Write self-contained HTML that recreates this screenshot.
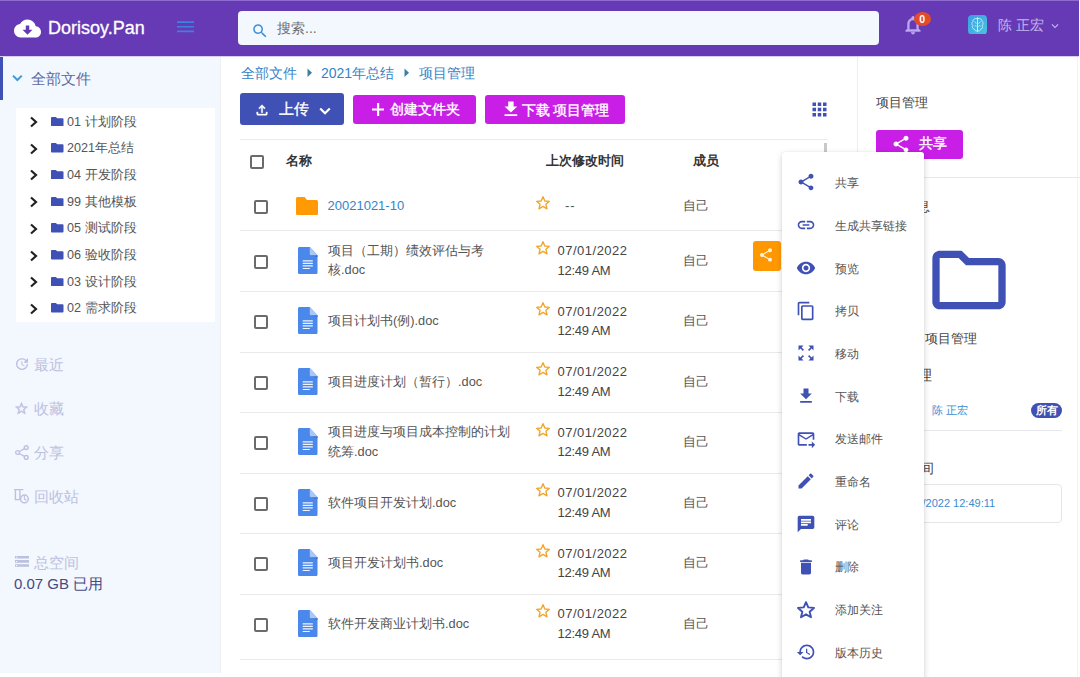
<!DOCTYPE html>
<html><head><meta charset="utf-8">
<style>
*{box-sizing:border-box;margin:0;padding:0}
html,body{width:1080px;height:677px;overflow:hidden;background:#fff;font-family:"Liberation Sans",sans-serif;color:#4a4a4a}
.a{position:absolute}
svg{display:block}
#hdr{left:0;top:0;width:1079px;height:57px;background:#653ab4;border-top:1px solid #8e6ad0;border-bottom:1px solid #d9cdf0}
#side{left:0;top:57px;width:221px;height:615.6px;background:#f3f7fe;border-right:1px solid #eef0f4}
#main{left:221px;top:57px;width:637px;height:620px;background:#fff}
#rp{left:857px;top:57px;width:223px;height:620px;background:#fff;border-left:1px solid #eceef3}
.nav{font-size:15px;color:#bcc1e0;left:34px;white-space:nowrap}
.tree{left:16px;top:108px;width:199px;height:214px;background:#fff}
.tr{position:absolute;left:0;height:27px;width:199px}
.tr .chev{position:absolute;left:13px;top:8px}
.tr .fd{position:absolute;left:35px;top:8.5px}
.tr .t{position:absolute;left:51px;top:5.5px;font-size:12.6px;color:#555;white-space:nowrap}
.btn{border-radius:3px;color:#fff;font-size:14px}
.row{position:absolute;left:240px;width:588px;border-bottom:1px solid #e8e8ec}
.cb{position:absolute;width:14px;height:14px;border:2px solid #6b6b6b;border-radius:2px}
.mi{position:absolute;left:0;width:142px;height:42.73px}
.mi svg{position:absolute;left:14px;top:11px}
.mi span{position:absolute;left:52.5px;top:13.8px;font-size:12px;color:#555;white-space:nowrap}
</style></head><body>
<!-- header -->
<div id="hdr" class="a">
  <svg class="a" style="left:13.7px;top:14.2px" width="27" height="27" viewBox="0 0 24 24"><path fill="#fff" fill-rule="evenodd" d="M19.35 10.04C18.67 6.59 15.64 4 12 4 9.11 4 6.6 5.64 5.35 8.04 2.34 8.36 0 10.91 0 14c0 3.31 2.69 6 6 6h13c2.76 0 5-2.24 5-5 0-2.64-2.05-4.78-4.65-4.96zM16.4 13.2L12 17.6 7.6 13.2H10.45V9.4H13.55V13.2z"/></svg>
  <div class="a" style="left:48px;top:17px;font-size:18px;color:#fff;white-space:nowrap;-webkit-text-stroke:0.3px #fff">Dorisoy.Pan</div>
  <svg class="a" style="left:176.5px;top:19.5px" width="17" height="12" viewBox="0 0 17 12"><path fill="#3f80e2" d="M0 .3h17v1.7H0zM0 4.9h17v1.7H0zM0 9.5h17v1.7H0z"/></svg>
  <div class="a" style="left:238px;top:10px;width:641px;height:34px;background:#f3f7fe;border-radius:4px"></div>
  <svg class="a" style="left:251px;top:21px" width="18" height="18" viewBox="0 0 24 24"><path fill="#3b8fd6" d="M15.5 14h-.79l-.28-.27C15.41 12.59 16 11.11 16 9.5 16 5.910 13.09 3 9.5 3S3 5.91 3 9.5 5.91 16 9.5 16c1.61 0 3.09-.59 4.23-1.57l.27.28v.79l5 4.99L20.49 19l-4.99-5zm-6 0C7.01 14 5 11.99 5 9.5S7.01 5 9.5 5 14 7.01 14 9.5 11.99 14 9.5 14z"/></svg>
  <div class="a" style="left:277px;top:19px;font-size:14px;color:#707070;white-space:nowrap">搜索...</div>
  <svg class="a" style="left:902px;top:13px" width="22" height="22" viewBox="0 0 24 24"><path fill="#bcaaf0" stroke="#bcaaf0" stroke-width="0.5" d="M12 22c1.1 0 2-.9 2-2h-4c0 1.1.9 2 2 2zm6-6v-5c0-3.07-1.64-5.64-4.5-6.32V4c0-.83-.67-1.5-1.5-1.5s-1.5.67-1.5 1.5v.68C7.63 5.36 6 7.92 6 11v5l-2 2v1h16v-1l-2-2zm-2 1H8v-6c0-2.48 1.51-4.5 4-4.5s4 2.020 4 4.5v6z"/></svg>
  <div class="a" style="left:913.5px;top:11.2px;width:17.5px;height:14px;border-radius:50%;background:#e44a2c;color:#fff;font-size:10.5px;font-weight:bold;text-align:center;line-height:14px">0</div>
  <svg class="a" style="left:968px;top:13.5px" width="19" height="19.5" viewBox="0 0 19 19.5"><defs><linearGradient id="ag" x1="0" y1="0" x2="1" y2="1"><stop offset="0" stop-color="#3a9ee6"/><stop offset="1" stop-color="#4cc3dc"/></linearGradient></defs><rect width="19" height="19.5" rx="4" fill="url(#ag)"/><g fill="none" stroke="#c8f4fb" stroke-width="0.9"><path d="M9.5 2.2v15"/><path d="M9 3.6C6.5 3 4.6 4.8 4.9 6.6 3.6 7.6 3.7 9.6 4.8 10.4c-.9 1.4-.2 3.4 1.4 3.7.4 1.6 2 2.1 2.9 1.7"/><path d="M10 3.6c2.5-.6 4.4 1.2 4.1 3 1.3 1 1.2 3 .1 3.8.9 1.4.2 3.4-1.4 3.7-.4 1.6-2 2.1-2.9 1.7"/><path d="M6.5 6.8c1 .2 1.6 1 1.6 1.8M6.6 11c.8-.4 1.6-.2 2.1.4M12.5 6.8c-1 .2-1.6 1-1.6 1.8M12.4 11c-.8-.4-1.6-.2-2.1.4"/></g></svg>
  <div class="a" style="left:998px;top:16px;font-size:14px;color:#c6b6ee;white-space:nowrap">陈 正宏</div>
  <svg class="a" style="left:1048px;top:17.5px" width="14" height="14" viewBox="0 0 24 24"><path fill="#c9b8f0" d="M16.59 8.59L12 13.17 7.41 8.59 6 10l6 6 6-6z"/></svg>
</div>

<!-- sidebar -->
<div id="side" class="a">
  <div class="a" style="left:0;top:0;width:3px;height:43px;background:#3f51b5"></div>
  <svg class="a" style="left:12px;top:17px" width="11" height="9" viewBox="0 0 11 9"><path d="M1 1.6L5.4 6 9.8 1.6" fill="none" stroke="#3d9bd6" stroke-width="2"/></svg>
  <div class="a" style="left:31px;top:13px;font-size:15px;color:#5a6aa0;white-space:nowrap">全部文件</div>
  <div class="a tree" style="top:51px">
  <div class="tr" style="top:0.0px"><svg class="chev" width="10" height="12" viewBox="0 0 10 12"><path d="M2 1.5 L7 6 L2 10.5" fill="none" stroke="#222" stroke-width="2.2"/></svg><svg class="fd" width="12.5" height="9.5" viewBox="0 0 13 11" preserveAspectRatio="none"><path fill="#3f51b5" d="M0 1.2C0 .5.5 0 1.2 0H5l1.5 1.5h5.3c.7 0 1.2.5 1.2 1.2v7.1c0 .7-.5 1.2-1.2 1.2H1.2C.5 11 0 10.5 0 9.8z"/></svg><span class="t">01 计划阶段</span></div>
  <div class="tr" style="top:26.7px"><svg class="chev" width="10" height="12" viewBox="0 0 10 12"><path d="M2 1.5 L7 6 L2 10.5" fill="none" stroke="#222" stroke-width="2.2"/></svg><svg class="fd" width="12.5" height="9.5" viewBox="0 0 13 11" preserveAspectRatio="none"><path fill="#3f51b5" d="M0 1.2C0 .5.5 0 1.2 0H5l1.5 1.5h5.3c.7 0 1.2.5 1.2 1.2v7.1c0 .7-.5 1.2-1.2 1.2H1.2C.5 11 0 10.5 0 9.8z"/></svg><span class="t">2021年总结</span></div>
  <div class="tr" style="top:53.4px"><svg class="chev" width="10" height="12" viewBox="0 0 10 12"><path d="M2 1.5 L7 6 L2 10.5" fill="none" stroke="#222" stroke-width="2.2"/></svg><svg class="fd" width="12.5" height="9.5" viewBox="0 0 13 11" preserveAspectRatio="none"><path fill="#3f51b5" d="M0 1.2C0 .5.5 0 1.2 0H5l1.5 1.5h5.3c.7 0 1.2.5 1.2 1.2v7.1c0 .7-.5 1.2-1.2 1.2H1.2C.5 11 0 10.5 0 9.8z"/></svg><span class="t">04 开发阶段</span></div>
  <div class="tr" style="top:80.1px"><svg class="chev" width="10" height="12" viewBox="0 0 10 12"><path d="M2 1.5 L7 6 L2 10.5" fill="none" stroke="#222" stroke-width="2.2"/></svg><svg class="fd" width="12.5" height="9.5" viewBox="0 0 13 11" preserveAspectRatio="none"><path fill="#3f51b5" d="M0 1.2C0 .5.5 0 1.2 0H5l1.5 1.5h5.3c.7 0 1.2.5 1.2 1.2v7.1c0 .7-.5 1.2-1.2 1.2H1.2C.5 11 0 10.5 0 9.8z"/></svg><span class="t">99 其他模板</span></div>
  <div class="tr" style="top:106.8px"><svg class="chev" width="10" height="12" viewBox="0 0 10 12"><path d="M2 1.5 L7 6 L2 10.5" fill="none" stroke="#222" stroke-width="2.2"/></svg><svg class="fd" width="12.5" height="9.5" viewBox="0 0 13 11" preserveAspectRatio="none"><path fill="#3f51b5" d="M0 1.2C0 .5.5 0 1.2 0H5l1.5 1.5h5.3c.7 0 1.2.5 1.2 1.2v7.1c0 .7-.5 1.2-1.2 1.2H1.2C.5 11 0 10.5 0 9.8z"/></svg><span class="t">05 测试阶段</span></div>
  <div class="tr" style="top:133.5px"><svg class="chev" width="10" height="12" viewBox="0 0 10 12"><path d="M2 1.5 L7 6 L2 10.5" fill="none" stroke="#222" stroke-width="2.2"/></svg><svg class="fd" width="12.5" height="9.5" viewBox="0 0 13 11" preserveAspectRatio="none"><path fill="#3f51b5" d="M0 1.2C0 .5.5 0 1.2 0H5l1.5 1.5h5.3c.7 0 1.2.5 1.2 1.2v7.1c0 .7-.5 1.2-1.2 1.2H1.2C.5 11 0 10.5 0 9.8z"/></svg><span class="t">06 验收阶段</span></div>
  <div class="tr" style="top:160.2px"><svg class="chev" width="10" height="12" viewBox="0 0 10 12"><path d="M2 1.5 L7 6 L2 10.5" fill="none" stroke="#222" stroke-width="2.2"/></svg><svg class="fd" width="12.5" height="9.5" viewBox="0 0 13 11" preserveAspectRatio="none"><path fill="#3f51b5" d="M0 1.2C0 .5.5 0 1.2 0H5l1.5 1.5h5.3c.7 0 1.2.5 1.2 1.2v7.1c0 .7-.5 1.2-1.2 1.2H1.2C.5 11 0 10.5 0 9.8z"/></svg><span class="t">03 设计阶段</span></div>
  <div class="tr" style="top:186.9px"><svg class="chev" width="10" height="12" viewBox="0 0 10 12"><path d="M2 1.5 L7 6 L2 10.5" fill="none" stroke="#222" stroke-width="2.2"/></svg><svg class="fd" width="12.5" height="9.5" viewBox="0 0 13 11" preserveAspectRatio="none"><path fill="#3f51b5" d="M0 1.2C0 .5.5 0 1.2 0H5l1.5 1.5h5.3c.7 0 1.2.5 1.2 1.2v7.1c0 .7-.5 1.2-1.2 1.2H1.2C.5 11 0 10.5 0 9.8z"/></svg><span class="t">02 需求阶段</span></div>
  </div>

  <svg class="a" style="left:13.6px;top:298.7px" width="16" height="16" viewBox="0 0 24 24"><path fill="#bcc1e0" d="M21 10.12h-6.78l2.74-2.82c-2.73-2.7-7.15-2.8-9.88-.1-2.73 2.71-2.73 7.08 0 9.79s7.150 2.71 9.88 0C18.32 15.65 19 14.08 19 12.1h2c0 1.98-.88 4.55-2.64 6.29-3.51 3.48-9.21 3.48-12.72 0-3.5-3.47-3.53-9.11-.02-12.58s9.14-3.47 12.65 0L21 3v7.12zM12.5 8v4.25l3.5 2.08-.72 1.21L11 13V8h1.5z"/></svg>
  <div class="a nav" style="top:298.5px">最近</div>
  <svg class="a" style="left:14.2px;top:344px" width="15" height="15" viewBox="0 0 24 24"><path stroke="#bcc1e0" stroke-width="0.8" fill="#bcc1e0" d="M22 9.24l-7.19-.62L12 2 9.19 8.63 2 9.24l5.46 4.73L5.82 21 12 17.27 18.18 21l-1.63-7.03L22 9.24zM12 15.4l-3.76 2.27 1-4.28-3.32-2.88 4.38-.38L12 6.1l1.71 4.04 4.38.38-3.32 2.88 1 4.28L12 15.4z"/></svg>
  <div class="a nav" style="top:342.5px">收藏</div>
  <svg class="a" style="left:15px;top:388px" width="14" height="15" viewBox="0 0 14 15"><g fill="none" stroke="#bcc1e0" stroke-width="1.4"><circle cx="11.2" cy="2.6" r="1.9"/><circle cx="2.6" cy="7.5" r="1.9"/><circle cx="11.2" cy="12.4" r="1.9"/><path d="M4.3 6.5l5.2-2.9M4.3 8.5l5.2 2.9"/></g></svg>
  <div class="a nav" style="top:386.5px">分享</div>
  <svg class="a" style="left:14.3px;top:432.3px" width="16" height="16" viewBox="0 0 16 16"><path fill="#bcc1e0" d="M0 0h9.3v1.3H0z"/><path fill="none" stroke="#bcc1e0" stroke-width="1.4" d="M1.4 1.3v9.3h4.5V1.3"/><circle cx="10.4" cy="9.9" r="3.9" fill="#f3f7fe" stroke="#bcc1e0" stroke-width="1.4"/><path fill="none" stroke="#bcc1e0" stroke-width="1.1" d="M10.4 6.6v3.3l2 1.6"/></svg>
  <div class="a nav" style="top:430.5px">回收站</div>
  <svg class="a" style="left:15px;top:498.8px" width="14" height="11" viewBox="0 0 14 11"><path fill="#bcc1e0" d="M0 0h14v2.6H0zM0 4.1h14v2.6H0zM0 8.2h14v2.6H0z"/><path fill="#f3f7fe" d="M1 .8h1.2v1H1zM1 4.9h1.2v1H1zM1 9h1.2v1H1z"/></svg>
  <div class="a nav" style="top:496.5px">总空间</div>
  <div class="a" style="left:14px;top:518px;font-size:15px;color:#454a85;white-space:nowrap">0.07 GB 已用</div>
</div>

<!-- main -->
<div id="main" class="a"></div>

<div class="a" style="left:241px;top:65px;font-size:14px;color:#3682c8;white-space:nowrap">全部文件</div>
<svg class="a" style="left:306px;top:68px" width="8" height="10" viewBox="0 0 8 10"><path fill="#3b7fa6" d="M1.5 .6L6 4.8 1.5 9z"/></svg>
<div class="a" style="left:321px;top:65px;font-size:14px;color:#3682c8;white-space:nowrap">2021年总结</div>
<svg class="a" style="left:403px;top:68px" width="8" height="10" viewBox="0 0 8 10"><path fill="#3b7fa6" d="M1.5 .6L6 4.8 1.5 9z"/></svg>
<div class="a" style="left:419px;top:65px;font-size:14px;color:#3682c8;white-space:nowrap">项目管理</div>

<div class="a btn" style="left:240px;top:93px;width:104px;height:32px;background:#3f51b5"></div>
<svg class="a" style="left:254px;top:102px" width="16" height="16" viewBox="0 0 24 24"><path fill="#fff" stroke="#fff" stroke-width="0.6" d="M18 15v3H6v-3H4v3c0 1.1.9 2 2 2h12c1.1 0 2-.9 2-2v-3h-2zM7 9l1.41 1.41L11 7.83V16h2V7.83l2.59 2.58L17 9l-5-5-5 5z"/></svg>
<div class="a" style="left:279px;top:100px;font-size:15px;color:#fff;white-space:nowrap;-webkit-text-stroke:0.35px #fff;">上传</div>
<svg class="a" style="left:318.5px;top:107px" width="12" height="8" viewBox="0 0 12 8"><path d="M1.2 1.5L6 6.2 10.8 1.5" fill="none" stroke="#fff" stroke-width="2.2"/></svg>

<div class="a btn" style="left:353px;top:94.5px;width:123px;height:29.5px;background:#c81ee6"></div>
<svg class="a" style="left:372px;top:103px" width="12" height="13" viewBox="0 0 12 13"><path fill="#fff" d="M5 0h2.2v5.4H12v2.2H7.2V13H5V7.6H0V5.4h5z"/></svg>
<div class="a" style="left:390px;top:101px;font-size:14px;color:#fff;white-space:nowrap;-webkit-text-stroke:0.35px #fff;">创建文件夹</div>

<div class="a btn" style="left:485px;top:94.5px;width:140px;height:29.5px;background:#c81ee6"></div>
<svg class="a" style="left:499.5px;top:99.4px" width="21.8" height="20.3" viewBox="0 0 24 24" preserveAspectRatio="none"><path fill="#fff" d="M19 9h-4V3H9v6H5l7 7 7-7zM5 18v2h14v-2H5z"/></svg>
<div class="a" style="left:521.5px;top:101.5px;font-size:14px;color:#fff;white-space:nowrap;-webkit-text-stroke:0.35px #fff;">下载 项目管理</div>

<svg class="a" style="left:809px;top:99px" width="21" height="21" viewBox="0 0 24 24"><path fill="#3f51b5" d="M4 8h4V4H4v4zm6 12h4v-4h-4v4zm-6 0h4v-4H4v4zm0-6h4v-4H4v4zm6 0h4v-4h-4v4zm6-10v4h4V4h-4zm-6 4h4V4h-4v4zm6 6h4v-4h-4v4zm0 6h4v-4h-4v4z"/></svg>

<div class="a" style="left:240px;top:139px;width:588px;height:1px;background:#ebebee"></div>
<div class="a" style="left:824px;top:143px;width:3px;height:12px;background:#c8c8c8"></div>
<div class="cb" style="left:250px;top:155px"></div>
<div class="a" style="left:286px;top:152.5px;font-size:12.5px;font-weight:bold;color:#333;white-space:nowrap">名称</div>
<div class="a" style="left:546px;top:152.5px;font-size:12.5px;font-weight:bold;color:#333;white-space:nowrap">上次修改时间</div>
<div class="a" style="left:693px;top:152.5px;font-size:12.5px;font-weight:bold;color:#333;white-space:nowrap">成员</div>
<div class="a" style="left:240px;top:230px;width:588px;height:1px;background:#e9e9ec"></div>
<div class="cb" style="left:253.5px;top:199.5px"></div>
<svg class="a" style="left:296.3px;top:196.6px" width="22" height="18" viewBox="0 0 22 18"><path fill="#ff9a05" d="M0 1.6C0 .7.7 0 1.6 0h7l2.4 2.9h9.4c.9 0 1.6.7 1.6 1.6v11.9c0 .9-.7 1.6-1.6 1.6H1.6C.7 18 0 17.3 0 16.4z"/></svg>
<div class="a" style="left:327.5px;top:198px;font-size:13px;color:#2f86c9;white-space:nowrap">20021021-10</div>
<svg class="a" style="left:534.5px;top:194.5px" width="16" height="16" viewBox="0 0 24 24"><path fill="none" stroke="#f0a62e" stroke-width="2.1" stroke-linejoin="round" d="M12 2.6L14.75 8.9 21.6 9.5 16.4 14 18 20.7 12 17.2 6 20.7 7.6 14 2.4 9.5 9.25 8.9z"/></svg>
<div class="a" style="left:565px;top:198px;font-size:13px;color:#555;white-space:nowrap;letter-spacing:1px">--</div>
<div class="a" style="left:683px;top:197px;font-size:13px;color:#555;white-space:nowrap">自己</div>
<div class="a" style="left:240px;top:291.0px;width:588px;height:1px;background:#e9e9ec"></div>
<div class="cb" style="left:253.5px;top:254.5px"></div>
<svg class="a" style="left:298px;top:246.8px" width="19.5" height="27" viewBox="0 0 19.5 27"><path fill="#4b88ec" d="M1.6 0H11.8L19.5 8.3V25.4c0 .9-.7 1.6-1.6 1.6H1.6C.7 27 0 26.3 0 25.4V1.6C0 .7.7 0 1.6 0z"/><path fill="#3a6ccc" d="M11.8 8.3h7.7v1.6z"/><path fill="#a9c8f8" d="M11.8 0L19.5 8.3H13.4c-.9 0-1.6-.7-1.6-1.6z"/><path fill="#f0f4fc" d="M4.7 13.3h10.1v1.2H4.7zM4.7 15.7h10.1v1.2H4.7zM4.7 18.3h10.1v1.2H4.7zM4.7 20.9h7.1v1.2H4.7z"/></svg>
<div class="a" style="left:328px;top:240.5px;font-size:12.8px;line-height:19.5px;color:#555;white-space:nowrap">项目（工期）绩效评估与考<br>核.doc</div>
<svg class="a" style="left:534.5px;top:240.0px" width="16" height="16" viewBox="0 0 24 24"><path fill="none" stroke="#f0a62e" stroke-width="2.1" stroke-linejoin="round" d="M12 2.6L14.75 8.9 21.6 9.5 16.4 14 18 20.7 12 17.2 6 20.7 7.6 14 2.4 9.5 9.25 8.9z"/></svg>
<div class="a" style="left:557.5px;top:241.4px;font-size:13px;line-height:19.5px;color:#444;white-space:nowrap"><span style="letter-spacing:.5px">07/01/2022</span><br><span style="letter-spacing:-.25px">12:49 AM</span></div>
<div class="a" style="left:683px;top:251.5px;font-size:13px;color:#555;white-space:nowrap">自己</div>
<div class="a" style="left:240px;top:351.5px;width:588px;height:1px;background:#e9e9ec"></div>
<div class="cb" style="left:253.5px;top:315.0px"></div>
<svg class="a" style="left:298px;top:307.3px" width="19.5" height="27" viewBox="0 0 19.5 27"><path fill="#4b88ec" d="M1.6 0H11.8L19.5 8.3V25.4c0 .9-.7 1.6-1.6 1.6H1.6C.7 27 0 26.3 0 25.4V1.6C0 .7.7 0 1.6 0z"/><path fill="#3a6ccc" d="M11.8 8.3h7.7v1.6z"/><path fill="#a9c8f8" d="M11.8 0L19.5 8.3H13.4c-.9 0-1.6-.7-1.6-1.6z"/><path fill="#f0f4fc" d="M4.7 13.3h10.1v1.2H4.7zM4.7 15.7h10.1v1.2H4.7zM4.7 18.3h10.1v1.2H4.7zM4.7 20.9h7.1v1.2H4.7z"/></svg>
<div class="a" style="left:328px;top:313.0px;font-size:12.8px;color:#555;white-space:nowrap">项目计划书(例).doc</div>
<svg class="a" style="left:534.5px;top:300.5px" width="16" height="16" viewBox="0 0 24 24"><path fill="none" stroke="#f0a62e" stroke-width="2.1" stroke-linejoin="round" d="M12 2.6L14.75 8.9 21.6 9.5 16.4 14 18 20.7 12 17.2 6 20.7 7.6 14 2.4 9.5 9.25 8.9z"/></svg>
<div class="a" style="left:557.5px;top:301.9px;font-size:13px;line-height:19.5px;color:#444;white-space:nowrap"><span style="letter-spacing:.5px">07/01/2022</span><br><span style="letter-spacing:-.25px">12:49 AM</span></div>
<div class="a" style="left:683px;top:312.0px;font-size:13px;color:#555;white-space:nowrap">自己</div>
<div class="a" style="left:240px;top:412.0px;width:588px;height:1px;background:#e9e9ec"></div>
<div class="cb" style="left:253.5px;top:375.5px"></div>
<svg class="a" style="left:298px;top:367.8px" width="19.5" height="27" viewBox="0 0 19.5 27"><path fill="#4b88ec" d="M1.6 0H11.8L19.5 8.3V25.4c0 .9-.7 1.6-1.6 1.6H1.6C.7 27 0 26.3 0 25.4V1.6C0 .7.7 0 1.6 0z"/><path fill="#3a6ccc" d="M11.8 8.3h7.7v1.6z"/><path fill="#a9c8f8" d="M11.8 0L19.5 8.3H13.4c-.9 0-1.6-.7-1.6-1.6z"/><path fill="#f0f4fc" d="M4.7 13.3h10.1v1.2H4.7zM4.7 15.7h10.1v1.2H4.7zM4.7 18.3h10.1v1.2H4.7zM4.7 20.9h7.1v1.2H4.7z"/></svg>
<div class="a" style="left:328px;top:373.5px;font-size:12.8px;color:#555;white-space:nowrap">项目进度计划（暂行）.doc</div>
<svg class="a" style="left:534.5px;top:361.0px" width="16" height="16" viewBox="0 0 24 24"><path fill="none" stroke="#f0a62e" stroke-width="2.1" stroke-linejoin="round" d="M12 2.6L14.75 8.9 21.6 9.5 16.4 14 18 20.7 12 17.2 6 20.7 7.6 14 2.4 9.5 9.25 8.9z"/></svg>
<div class="a" style="left:557.5px;top:362.4px;font-size:13px;line-height:19.5px;color:#444;white-space:nowrap"><span style="letter-spacing:.5px">07/01/2022</span><br><span style="letter-spacing:-.25px">12:49 AM</span></div>
<div class="a" style="left:683px;top:372.5px;font-size:13px;color:#555;white-space:nowrap">自己</div>
<div class="a" style="left:240px;top:472.5px;width:588px;height:1px;background:#e9e9ec"></div>
<div class="cb" style="left:253.5px;top:436.0px"></div>
<svg class="a" style="left:298px;top:428.3px" width="19.5" height="27" viewBox="0 0 19.5 27"><path fill="#4b88ec" d="M1.6 0H11.8L19.5 8.3V25.4c0 .9-.7 1.6-1.6 1.6H1.6C.7 27 0 26.3 0 25.4V1.6C0 .7.7 0 1.6 0z"/><path fill="#3a6ccc" d="M11.8 8.3h7.7v1.6z"/><path fill="#a9c8f8" d="M11.8 0L19.5 8.3H13.4c-.9 0-1.6-.7-1.6-1.6z"/><path fill="#f0f4fc" d="M4.7 13.3h10.1v1.2H4.7zM4.7 15.7h10.1v1.2H4.7zM4.7 18.3h10.1v1.2H4.7zM4.7 20.9h7.1v1.2H4.7z"/></svg>
<div class="a" style="left:328px;top:422.0px;font-size:12.8px;line-height:19.5px;color:#555;white-space:nowrap">项目进度与项目成本控制的计划<br>统筹.doc</div>
<svg class="a" style="left:534.5px;top:421.5px" width="16" height="16" viewBox="0 0 24 24"><path fill="none" stroke="#f0a62e" stroke-width="2.1" stroke-linejoin="round" d="M12 2.6L14.75 8.9 21.6 9.5 16.4 14 18 20.7 12 17.2 6 20.7 7.6 14 2.4 9.5 9.25 8.9z"/></svg>
<div class="a" style="left:557.5px;top:422.9px;font-size:13px;line-height:19.5px;color:#444;white-space:nowrap"><span style="letter-spacing:.5px">07/01/2022</span><br><span style="letter-spacing:-.25px">12:49 AM</span></div>
<div class="a" style="left:683px;top:433.0px;font-size:13px;color:#555;white-space:nowrap">自己</div>
<div class="a" style="left:240px;top:533.0px;width:588px;height:1px;background:#e9e9ec"></div>
<div class="cb" style="left:253.5px;top:496.5px"></div>
<svg class="a" style="left:298px;top:488.8px" width="19.5" height="27" viewBox="0 0 19.5 27"><path fill="#4b88ec" d="M1.6 0H11.8L19.5 8.3V25.4c0 .9-.7 1.6-1.6 1.6H1.6C.7 27 0 26.3 0 25.4V1.6C0 .7.7 0 1.6 0z"/><path fill="#3a6ccc" d="M11.8 8.3h7.7v1.6z"/><path fill="#a9c8f8" d="M11.8 0L19.5 8.3H13.4c-.9 0-1.6-.7-1.6-1.6z"/><path fill="#f0f4fc" d="M4.7 13.3h10.1v1.2H4.7zM4.7 15.7h10.1v1.2H4.7zM4.7 18.3h10.1v1.2H4.7zM4.7 20.9h7.1v1.2H4.7z"/></svg>
<div class="a" style="left:328px;top:494.5px;font-size:12.8px;color:#555;white-space:nowrap">软件项目开发计划.doc</div>
<svg class="a" style="left:534.5px;top:482.0px" width="16" height="16" viewBox="0 0 24 24"><path fill="none" stroke="#f0a62e" stroke-width="2.1" stroke-linejoin="round" d="M12 2.6L14.75 8.9 21.6 9.5 16.4 14 18 20.7 12 17.2 6 20.7 7.6 14 2.4 9.5 9.25 8.9z"/></svg>
<div class="a" style="left:557.5px;top:483.4px;font-size:13px;line-height:19.5px;color:#444;white-space:nowrap"><span style="letter-spacing:.5px">07/01/2022</span><br><span style="letter-spacing:-.25px">12:49 AM</span></div>
<div class="a" style="left:683px;top:493.5px;font-size:13px;color:#555;white-space:nowrap">自己</div>
<div class="a" style="left:240px;top:593.5px;width:588px;height:1px;background:#e9e9ec"></div>
<div class="cb" style="left:253.5px;top:557.0px"></div>
<svg class="a" style="left:298px;top:549.3px" width="19.5" height="27" viewBox="0 0 19.5 27"><path fill="#4b88ec" d="M1.6 0H11.8L19.5 8.3V25.4c0 .9-.7 1.6-1.6 1.6H1.6C.7 27 0 26.3 0 25.4V1.6C0 .7.7 0 1.6 0z"/><path fill="#3a6ccc" d="M11.8 8.3h7.7v1.6z"/><path fill="#a9c8f8" d="M11.8 0L19.5 8.3H13.4c-.9 0-1.6-.7-1.6-1.6z"/><path fill="#f0f4fc" d="M4.7 13.3h10.1v1.2H4.7zM4.7 15.7h10.1v1.2H4.7zM4.7 18.3h10.1v1.2H4.7zM4.7 20.9h7.1v1.2H4.7z"/></svg>
<div class="a" style="left:328px;top:555.0px;font-size:12.8px;color:#555;white-space:nowrap">项目开发计划书.doc</div>
<svg class="a" style="left:534.5px;top:542.5px" width="16" height="16" viewBox="0 0 24 24"><path fill="none" stroke="#f0a62e" stroke-width="2.1" stroke-linejoin="round" d="M12 2.6L14.75 8.9 21.6 9.5 16.4 14 18 20.7 12 17.2 6 20.7 7.6 14 2.4 9.5 9.25 8.9z"/></svg>
<div class="a" style="left:557.5px;top:543.9px;font-size:13px;line-height:19.5px;color:#444;white-space:nowrap"><span style="letter-spacing:.5px">07/01/2022</span><br><span style="letter-spacing:-.25px">12:49 AM</span></div>
<div class="a" style="left:683px;top:554.0px;font-size:13px;color:#555;white-space:nowrap">自己</div>
<div class="a" style="left:240px;top:658.5px;width:588px;height:1px;background:#e9e9ec"></div>
<div class="cb" style="left:253.5px;top:617.5px"></div>
<svg class="a" style="left:298px;top:609.8px" width="19.5" height="27" viewBox="0 0 19.5 27"><path fill="#4b88ec" d="M1.6 0H11.8L19.5 8.3V25.4c0 .9-.7 1.6-1.6 1.6H1.6C.7 27 0 26.3 0 25.4V1.6C0 .7.7 0 1.6 0z"/><path fill="#3a6ccc" d="M11.8 8.3h7.7v1.6z"/><path fill="#a9c8f8" d="M11.8 0L19.5 8.3H13.4c-.9 0-1.6-.7-1.6-1.6z"/><path fill="#f0f4fc" d="M4.7 13.3h10.1v1.2H4.7zM4.7 15.7h10.1v1.2H4.7zM4.7 18.3h10.1v1.2H4.7zM4.7 20.9h7.1v1.2H4.7z"/></svg>
<div class="a" style="left:328px;top:615.5px;font-size:12.8px;color:#555;white-space:nowrap">软件开发商业计划书.doc</div>
<svg class="a" style="left:534.5px;top:603.0px" width="16" height="16" viewBox="0 0 24 24"><path fill="none" stroke="#f0a62e" stroke-width="2.1" stroke-linejoin="round" d="M12 2.6L14.75 8.9 21.6 9.5 16.4 14 18 20.7 12 17.2 6 20.7 7.6 14 2.4 9.5 9.25 8.9z"/></svg>
<div class="a" style="left:557.5px;top:604.4px;font-size:13px;line-height:19.5px;color:#444;white-space:nowrap"><span style="letter-spacing:.5px">07/01/2022</span><br><span style="letter-spacing:-.25px">12:49 AM</span></div>
<div class="a" style="left:683px;top:614.5px;font-size:13px;color:#555;white-space:nowrap">自己</div>
<div class="a" style="left:752.6px;top:241.2px;width:28.9px;height:30.2px;border-radius:3px;background:#ff9800"></div>
<svg class="a" style="left:758px;top:246.8px" width="16" height="16" viewBox="0 0 24 24"><path fill="#fff3d9" d="M18 16.08c-.76 0-1.44.3-1.96.77L8.91 12.7c.05-.23.09-.46.09-.7s-.04-.47-.09-.7l7.05-4.11c.54.5 1.25.81 2.04.81 1.66 0 3-1.34 3-3s-1.34-3-3-3-3 1.34-3 3c0 .24.04.47.09.7L8.04 9.81C7.5 9.31 6.79 9 6 9c-1.66 0-3 1.34-3 3s1.34 3 3 3c.79 0 1.5-.31 2.04-.81l7.12 4.16c-.05.21-.08.43-.08.65 0 1.61 1.31 2.92 2.92 2.92 1.61 0 2.92-1.31 2.92-2.92s-1.31-2.92-2.92-2.92z"/></svg>

<!-- right panel -->
<div id="rp" class="a"></div>

<div class="a" style="left:876px;top:93.5px;font-size:13px;color:#444;white-space:nowrap">项目管理</div>
<div class="a btn" style="left:876px;top:130px;width:87px;height:29px;background:#c81ee6"></div>
<svg class="a" style="left:891px;top:134px" width="20" height="20" viewBox="0 0 24 24"><path fill="#fff" d="M18 16.08c-.76 0-1.44.3-1.96.77L8.91 12.7c.05-.23.09-.46.09-.7s-.04-.47-.09-.7l7.05-4.11c.54.5 1.25.81 2.04.81 1.66 0 3-1.34 3-3s-1.34-3-3-3-3 1.34-3 3c0 .24.04.47.09.7L8.04 9.81C7.5 9.31 6.79 9 6 9c-1.66 0-3 1.34-3 3s1.34 3 3 3c.79 0 1.5-.31 2.04-.81l7.12 4.16c-.05.21-.08.43-.08.65 0 1.61 1.31 2.92 2.92 2.92 1.61 0 2.92-1.31 2.92-2.92s-1.31-2.92-2.92-2.92z"/></svg>
<div class="a" style="left:919px;top:135px;font-size:14px;color:#fff;white-space:nowrap;-webkit-text-stroke:0.35px #fff;">共享</div>
<div class="a" style="left:858px;top:177px;width:222px;height:1px;background:#e8e8ec"></div>
<div class="a" style="left:1076.5px;top:57px;width:1px;height:620px;background:#f2f2f4"></div>
<div class="a" style="left:874px;top:198px;font-size:14px;color:#444;white-space:nowrap">基本信息</div>
<svg class="a" style="left:925px;top:236px" width="88" height="88" viewBox="0 0 24 24"><path fill="#3f51b5" d="M9.17 6l2 2H20v10H4V6h5.17M10 4H4c-1.1 0-1.99.9-1.99 2L2 18c0 1.1.9 2 2 2h16c1.1 0 2-.9 2-2V8c0-1.1-.9-2-2-2h-8l-2-2z"/></svg>
<div class="a" style="left:925px;top:330px;font-size:13px;color:#444;white-space:nowrap">项目管理</div>
<div class="a" style="left:876px;top:367px;font-size:14px;color:#444;white-space:nowrap">权限管理</div>
<div class="a" style="left:932px;top:403px;font-size:11px;color:#3b8bd0;white-space:nowrap">陈 正宏</div>
<div class="a" style="left:1031px;top:403px;width:31px;height:15px;border-radius:8px;background:#3f51b5;color:#fff;font-size:11px;font-weight:bold;text-align:center;line-height:15px">所有</div>
<div class="a" style="left:876px;top:430px;width:186px;height:1px;background:#e8e8ec"></div>
<div class="a" style="left:877.5px;top:459.5px;font-size:14px;color:#444;white-space:nowrap">创建时间</div>
<div class="a" style="left:876px;top:484px;width:186px;height:39px;border:1px solid #e6e6ea;border-radius:4px"></div>
<div class="a" style="left:895px;top:497px;font-size:11px;color:#3b8bd0;white-space:nowrap">07/01/2022 12:49:11</div>
<div class="a" style="left:782px;top:152.3px;width:142px;height:540px;background:#fff;border-radius:3px;box-shadow:0 2px 6px rgba(0,0,0,.18),0 0 1px rgba(0,0,0,.12)">
<div class="mi" style="top:9.20px"><svg width="20" height="20" viewBox="0 0 24 24"><path fill="#3f51b5" d="M18 16.08c-.76 0-1.44.3-1.96.77L8.91 12.7c.05-.23.09-.46.09-.7s-.04-.47-.09-.7l7.05-4.11c.54.5 1.25.81 2.04.81 1.66 0 3-1.34 3-3s-1.34-3-3-3-3 1.34-3 3c0 .24.04.47.09.7L8.04 9.81C7.5 9.31 6.79 9 6 9c-1.66 0-3 1.34-3 3s1.34 3 3 3c.79 0 1.5-.31 2.04-.81l7.12 4.16c-.05.21-.08.43-.08.65 0 1.61 1.31 2.92 2.92 2.92 1.61 0 2.92-1.31 2.92-2.92s-1.31-2.92-2.92-2.92z"/></svg><span>共享</span></div>
<div class="mi" style="top:51.88px"><svg width="20" height="20" viewBox="0 0 24 24"><path fill="#3f51b5" d="M3.9 12c0-1.71 1.39-3.1 3.1-3.1h4V7H7c-2.76 0-5 2.24-5 5s2.24 5 5 5h4v-1.9H7c-1.71 0-3.1-1.39-3.1-3.1zM8 13h8v-2H8v2zm9-6h-4v1.9h4c1.71 0 3.1 1.39 3.1 3.1s-1.39 3.1-3.1 3.1h-4V17h4c2.76 0 5-2.24 5-5s-2.24-5-5-5z"/></svg><span>生成共享链接</span></div>
<div class="mi" style="top:94.56px"><svg width="20" height="20" viewBox="0 0 24 24"><path fill="#3f51b5" d="M12 4.5C7 4.5 2.73 7.61 1 12c1.73 4.39 6 7.5 11 7.5s9.27-3.11 11-7.5c-1.73-4.39-6-7.5-11-7.5zM12 17c-2.76 0-5-2.24-5-5s2.24-5 5-5 5 2.24 5 5-2.24 5-5 5zm0-8c-1.66 0-3 1.34-3 3s1.34 3 3 3 3-1.34 3-3-1.34-3-3-3z"/></svg><span>预览</span></div>
<div class="mi" style="top:137.24px"><svg width="20" height="20" viewBox="0 0 24 24"><path fill="#3f51b5" d="M16 1H4c-1.1 0-2 .9-2 2v14h2V3h12V1zm3 4H8c-1.1 0-2 .9-2 2v14c0 1.1.9 2 2 2h11c1.1 0 2-.9 2-2V7c0-1.1-.9-2-2-2zm0 16H8V7h11v14z"/></svg><span>拷贝</span></div>
<div class="mi" style="top:179.92px"><svg width="20" height="20" viewBox="0 0 24 24"><path fill="#3f51b5" d="M15 3l2.3 2.3-2.89 2.87 1.42 1.42L18.7 6.7 21 9V3zM3 9l2.3-2.3 2.87 2.89 1.42-1.42L6.7 5.3 9 3H3zm6 12l-2.3-2.3 2.89-2.87-1.42-1.42L5.3 17.3 3 15v6zm12-6l-2.3 2.3-2.87-2.89-1.42 1.42 2.89 2.87L15 21h6z"/></svg><span>移动</span></div>
<div class="mi" style="top:222.60px"><svg width="20" height="20" viewBox="0 0 24 24"><path fill="#3f51b5" d="M19 9h-4V3H9v6H5l7 7 7-7zM5 18v2h14v-2H5z"/></svg><span>下载</span></div>
<div class="mi" style="top:265.28px"><svg width="20" height="20" viewBox="0 0 24 24"><path fill="#3f51b5" d="M20 4H4c-1.1 0-1.99.9-1.99 2L2 18c0 1.1.9 2 2 2h9v-2H4V8l8 5 8-5v5h2V6c0-1.1-.9-2-2-2zm-8 7L4 6h16l-8 5zm7 4l4 4-4 4v-3h-4v-2h4v-3z"/></svg><span>发送邮件</span></div>
<div class="mi" style="top:307.96px"><svg width="20" height="20" viewBox="0 0 24 24"><path fill="#3f51b5" d="M3 17.25V21h3.75L17.81 9.94l-3.75-3.75L3 17.25zM20.71 7.04c.39-.39.39-1.02 0-1.41l-2.34-2.34c-.39-.39-1.02-.39-1.41 0l-1.83 1.83 3.75 3.75 1.83-1.83z"/></svg><span>重命名</span></div>
<div class="mi" style="top:350.64px"><svg width="20" height="20" viewBox="0 0 24 24"><path fill="#3f51b5" d="M20 2H4c-1.1 0-1.99.9-1.99 2L2 22l4-4h14c1.1 0 2-.9 2-2V4c0-1.1-.9-2-2-2zM6 9h12v2H6V9zm8 5H6v-2h8v2zm4-6H6V6h12v2z"/></svg><span>评论</span></div>
<div class="mi" style="top:393.32px"><svg width="20" height="20" viewBox="0 0 24 24"><path fill="#3f51b5" d="M6 19c0 1.1.9 2 2 2h8c1.1 0 2-.9 2-2V7H6v12zM19 4h-3.5l-1-1h-5l-1 1H5v2h14V4z"/></svg><span>删除</span></div>
<div class="mi" style="top:436.00px"><svg width="20" height="20" viewBox="0 0 24 24" style="left:14px;top:11.4px"><path fill="none" stroke="#3f51b5" stroke-width="2.3" stroke-linejoin="round" d="M12 2.6L14.75 8.9 21.6 9.5 16.4 14 18 20.7 12 17.2 6 20.7 7.6 14 2.4 9.5 9.25 8.9z"/></svg><span>添加关注</span></div>
<div class="mi" style="top:478.68px"><svg width="20" height="20" viewBox="0 0 24 24"><path fill="#3f51b5" d="M13 3c-4.97 0-9 4.03-9 9H1l3.89 3.89.07.14L9 12H6c0-3.87 3.13-7 7-7s7 3.13 7 7-3.13 7-7 7c-1.93 0-3.68-.79-4.94-2.06l-1.42 1.42C8.27 19.99 10.51 21 13 21c4.97 0 9-4.03 9-9s-4.03-9-9-9zm-1 5v5l4.28 2.54.72-1.21-3.5-2.08V8H12z"/></svg><span>版本历史</span></div>
</div>
</body></html>
